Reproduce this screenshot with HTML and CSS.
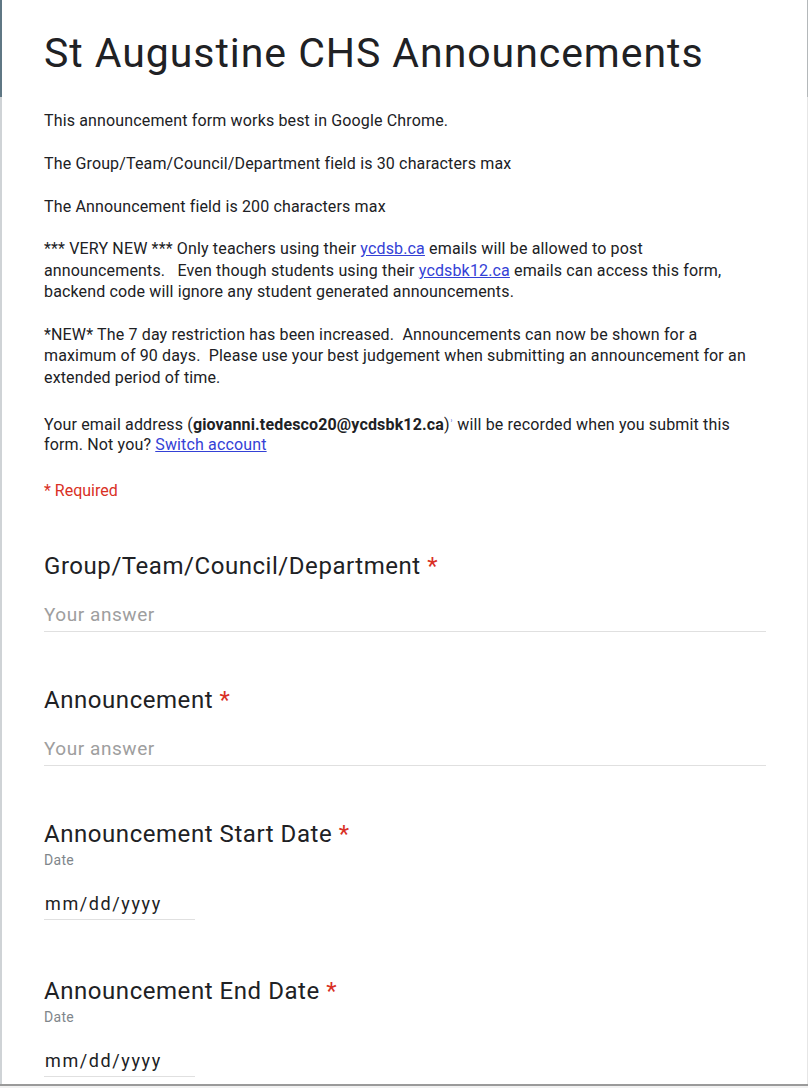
FILE: index.html
```html
<!DOCTYPE html>
<html lang="en">
<head>
<meta charset="utf-8">
<title>St Augustine CHS Announcements</title>
<link rel="stylesheet" href="styles.css">
</head>
<body>
<div class="frame">
  <div class="edge edge-left"><div class="edge-top"></div><div class="edge-rest"></div></div>
  <main class="card">
    <header class="form-header">
      <h1 class="form-title">St Augustine CHS Announcements</h1>
      <div class="form-desc">
        This announcement form works best in Google Chrome.<br><br>
        The Group/Team/Council/Department field is 30 characters max<br><br>
        The Announcement field is 200 characters max<br><br>
        *** VERY NEW *** Only teachers using their <a href="#" class="link">ycdsb.ca</a> emails will be allowed to post<br>
        announcements.&nbsp;&nbsp; Even though students using their <a href="#" class="link">ycdsbk12.ca</a> emails can access this form,<br>
        backend code will ignore any student generated announcements.<br><br>
        *NEW* The 7 day restriction has been increased.&nbsp; Announcements can now be shown for a<br>
        maximum of 90 days.&nbsp; Please use your best judgement when submitting an announcement for an<br>
        extended period of time.
      </div>
      <div class="form-email">Your email address (<b>giovanni.tedesco20@ycdsbk12.ca</b>)<span class="dot">ʾ</span> will be recorded when you submit this<br>form. Not you? <a href="#" class="link">Switch account</a></div>
      <div class="form-required">* Required</div>
    </header>

    <section class="question">
      <div class="q-title">Group/Team/Council/Department <span class="ast">*</span></div>
      <div class="text-input">Your answer</div>
    </section>

    <section class="question">
      <div class="q-title">Announcement <span class="ast">*</span></div>
      <div class="text-input">Your answer</div>
    </section>

    <section class="question date-q">
      <div class="q-title">Announcement Start Date <span class="ast">*</span></div>
      <div class="q-help">Date</div>
      <div class="date-input">mm/dd/yyyy</div>
    </section>

    <section class="question date-q">
      <div class="q-title">Announcement End Date <span class="ast">*</span></div>
      <div class="q-help">Date</div>
      <div class="date-input">mm/dd/yyyy</div>
    </section>
  </main>
  <div class="edge edge-right"><div class="edge-top"></div><div class="edge-rest"></div></div>
</div>
<div class="below"></div>
</body>
</html>
```

FILE: styles.css
```css
html, body {
  margin: 0;
  padding: 0;
  background: #f1f1f1;
}
body {
  font-family: Roboto, "Liberation Sans", Arial, sans-serif;
  color: #202124;
  width: 808px;
  height: 1088px;
  overflow: hidden;
}
.frame {
  display: flex;
  height: 1084px;
  background: #ffffff;
  border-bottom: 2px solid #9a9a9a;
  overflow: hidden;
}
.edge {
  display: flex;
  flex-direction: column;
  flex: none;
}
.edge-left { width: 2px; }
.edge-right { width: 1px; }
.edge-top { height: 97px; }
.edge-rest { flex: 1; }
.edge-left .edge-top { background: #5f7784; }
.edge-left .edge-rest { background: #cfd3d6; }
.edge-right .edge-top { background: #b4b8ba; }
.edge-right .edge-rest { background: #e6e6e6; }

.card {
  flex: 1;
  padding: 0 41px 0 42px;
}
.form-header {
  padding-top: 29px;
}
.form-title {
  margin: 0;
  font-size: 41px;
  font-weight: 400;
  letter-spacing: 0.95px;
  line-height: 48px;
  color: #202124;
}
.form-desc {
  margin-top: 33px;
  font-size: 16px;
  letter-spacing: 0.15px;
  line-height: 21.4px;
  color: #202124;
}
.link {
  color: #3441d6;
  text-decoration: underline;
}
.form-email {
  margin-top: 27px;
  font-size: 16px;
  letter-spacing: 0.15px;
  line-height: 20px;
}
.form-email b { font-weight: 700; }
.dot {
  color: #3441d6;
  font-size: 10px;
  vertical-align: top;
}
.form-required {
  margin-top: 26px;
  font-size: 16px;
  line-height: 20px;
  color: #d93025;
}
.question {
  padding-top: 49px;
}
.question + .question { padding-top: 52.5px; }
.date-q + .date-q { padding-top: 55.5px; }
.q-title {
  font-size: 24px;
  letter-spacing: 0.55px;
  line-height: 32px;
  color: #202124;
}
.ast { color: #d93025; }
.text-input {
  margin-top: 20px;
  font-size: 19px;
  letter-spacing: 0.55px;
  line-height: 26px;
  color: #9e9e9e;
  border-bottom: 1px solid #e0e0e0;
  padding-bottom: 2.5px;
}
.q-help {
  font-size: 14px;
  letter-spacing: 0.3px;
  line-height: 16px;
  color: #80868b;
  margin-top: 2px;
}
.date-input {
  width: 150px;
  margin-top: 23px;
  font-size: 18px;
  letter-spacing: 1.6px;
  line-height: 26px;
  padding-left: 1px;
  color: #202124;
  border-bottom: 1px solid #e0e0e0;
  padding-bottom: 1.5px;
}
.below { height: 2px; }
```
